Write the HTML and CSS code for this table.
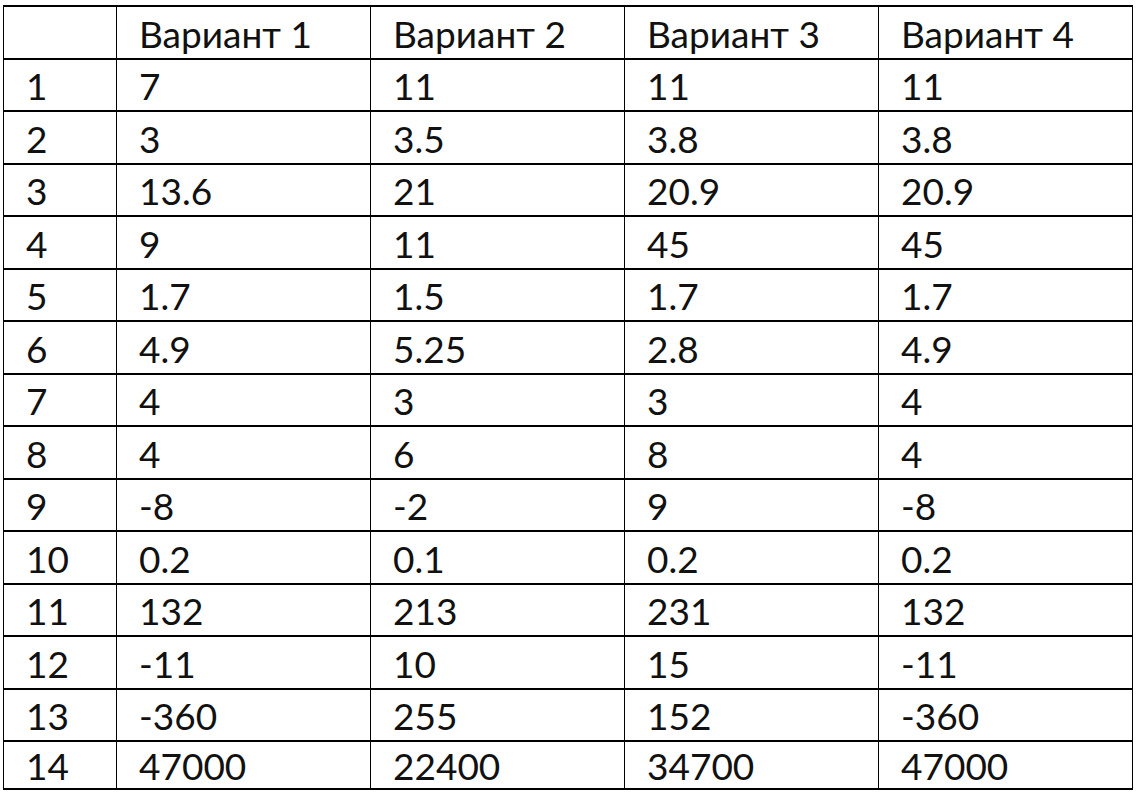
FILE: index.html
```html
<!DOCTYPE html>
<html lang="ru">
<head>
<meta charset="utf-8">
<title>Варианты</title>
<link rel="stylesheet" href="styles.css">
</head>
<body>
<table class="grid">
  <colgroup>
    <col class="c-num">
    <col class="c-var">
    <col class="c-var">
    <col class="c-var">
    <col class="c-var">
  </colgroup>
  <tr><td></td><td>Вариант 1</td><td>Вариант 2</td><td>Вариант 3</td><td>Вариант 4</td></tr>
  <tr><td>1</td><td>7</td><td>11</td><td>11</td><td>11</td></tr>
  <tr><td>2</td><td>3</td><td>3.5</td><td>3.8</td><td>3.8</td></tr>
  <tr><td>3</td><td>13.6</td><td>21</td><td>20.9</td><td>20.9</td></tr>
  <tr><td>4</td><td>9</td><td>11</td><td>45</td><td>45</td></tr>
  <tr><td>5</td><td>1.7</td><td>1.5</td><td>1.7</td><td>1.7</td></tr>
  <tr><td>6</td><td>4.9</td><td>5.25</td><td>2.8</td><td>4.9</td></tr>
  <tr><td>7</td><td>4</td><td>3</td><td>3</td><td>4</td></tr>
  <tr><td>8</td><td>4</td><td>6</td><td>8</td><td>4</td></tr>
  <tr><td>9</td><td>-8</td><td>-2</td><td>9</td><td>-8</td></tr>
  <tr><td>10</td><td>0.2</td><td>0.1</td><td>0.2</td><td>0.2</td></tr>
  <tr><td>11</td><td>132</td><td>213</td><td>231</td><td>132</td></tr>
  <tr><td>12</td><td>-11</td><td>10</td><td>15</td><td>-11</td></tr>
  <tr><td>13</td><td>-360</td><td>255</td><td>152</td><td>-360</td></tr>
  <tr class="last"><td>14</td><td>47000</td><td>22400</td><td>34700</td><td>47000</td></tr>
</table>
</body>
</html>
```
FILE: styles.css
```css
html, body {
  margin: 0;
  padding: 0;
  background: #ffffff;
}

body {
  padding: 5px 0 0 3px;
}

.grid {
  border-collapse: collapse;
  table-layout: fixed;
  width: 1130px;
  font-family: "Lato", "Open Sans", sans-serif;
  font-size: 37px;
  color: #111111;
}

.c-num { width: 113px; }
.c-var { width: 254px; }

.grid td {
  height: 48.5px;
  padding: 2px 0 0 22px;
  border-left: 1px solid #000;
  border-right: 1px solid #000;
  border-top: 2px solid #000;
  border-bottom: 2px solid #000;
  vertical-align: middle;
  line-height: 1;
  white-space: nowrap;
}

.grid .last td {
  height: 46px;
  padding-top: 0;
}
```
